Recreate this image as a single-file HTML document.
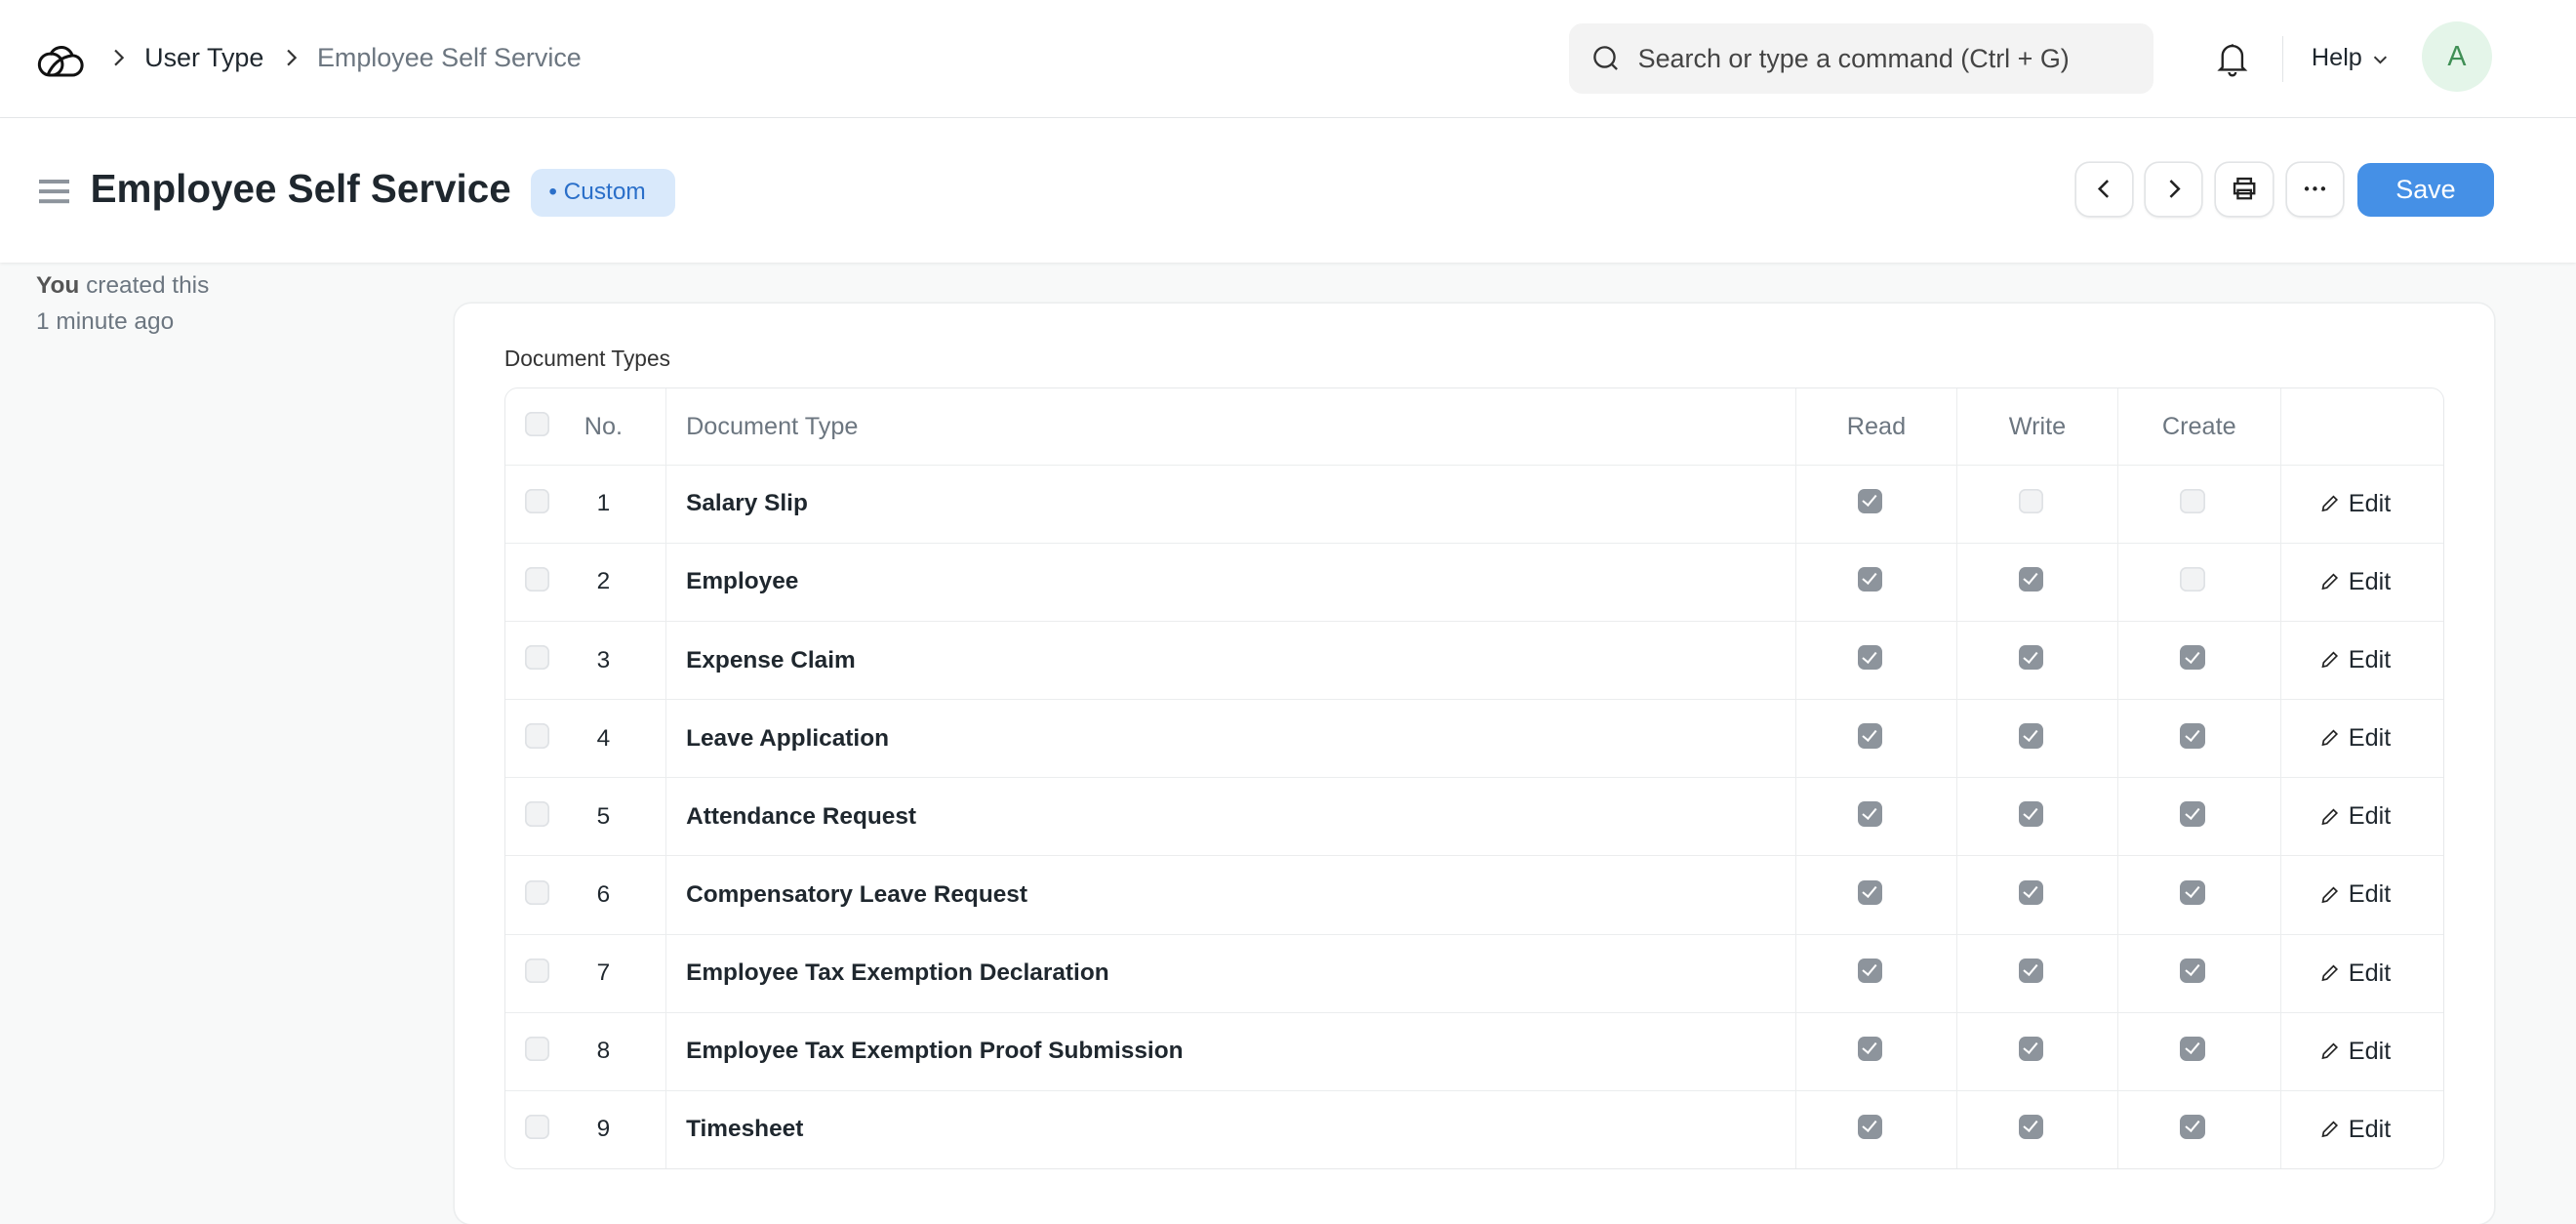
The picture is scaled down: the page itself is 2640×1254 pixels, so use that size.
<!DOCTYPE html>
<html><head><meta charset="utf-8"><style>
html{zoom:1.68367}
body{margin:0;width:1568px;height:719px;overflow:hidden;background:#f8f9f9;font-family:"Liberation Sans",sans-serif;color:#1f272e;position:relative}
.abs{position:absolute}
.nav{left:0;top:0;width:1568px;height:71px;background:#fff;border-bottom:1px solid #e6e8ea}
.head{left:0;top:72px;width:1568px;height:88px;background:#fff;box-shadow:0 1px 2px rgba(0,0,0,.08)}
.btn{top:99px;width:34px;height:32px;border-radius:8px;background:#fff;box-shadow:0 0 0 1px #e2e4e6,0 1px 2px rgba(0,0,0,.1);display:flex;align-items:center;justify-content:center}
.card{left:277px;top:185px;width:1241px;height:560px;background:#fff;border-radius:10px;box-shadow:0 0 0 1px #eceeef}
table{position:absolute;left:307px;top:236px;width:1181px;border-collapse:separate;border-spacing:0;border:1px solid #e6e8ea;border-radius:8px;font-size:14.5px;table-layout:fixed}
td,th{border-right:1px solid #ebedee;border-bottom:1px solid #ebedee;height:47px;padding:0;text-align:center}
th{font-weight:normal;color:#6c7680;font-size:15px;height:46px}
tr:last-child td{border-bottom:none}
td:last-child,th:last-child{border-right:none}
td:first-child,th:first-child{border-right:none;text-align:left;padding-left:12px}
td:nth-child(2),th:nth-child(2){padding-right:18px}
td:nth-child(4),td:nth-child(5),td:nth-child(6){padding-right:8px;vertical-align:middle}
.dt{text-align:left;padding-left:12px;font-weight:bold}
.cb{display:inline-block;width:15px;height:15px;border-radius:4px;background:#f2f3f4;box-shadow:inset 0 0 0 1px #dfe2e5;vertical-align:middle;position:relative;top:-2px}
.ck{background:#8d949c;box-shadow:none}
.ck:after{content:"";position:absolute;left:5px;top:2px;width:3.5px;height:7px;border:solid #fff;border-width:0 1.6px 1.6px 0;transform:rotate(40deg)}
.ed{font-size:15px;color:#1f272e;padding-right:8px}
.ed svg{vertical-align:-1px;margin-right:6px}
</style></head><body>
<div class="abs nav"></div>
<svg class="abs" style="left:22px;top:24px" width="30" height="24" viewBox="0 0 30 24" fill="none" stroke="#111" stroke-width="1.8"><path d="M8 22h14a6 6 0 0 0 0-12 7 7 0 0 0-13-1 5 5 0 0 0-1 13z"/><path d="M9 9a5 5 0 0 1 1 13M7 22c3-7 8-11 15-12"/></svg>
<svg class="abs" style="left:67px;top:29px" width="10" height="12" viewBox="0 0 10 12" fill="none" stroke="#333" stroke-width="1.3"><path d="M3 1.5l4.5 4.5L3 10.5"/></svg>
<div class="abs" style="left:88px;top:26px;font-size:16px;color:#1f272e">User Type</div>
<svg class="abs" style="left:172px;top:29px" width="10" height="12" viewBox="0 0 10 12" fill="none" stroke="#333" stroke-width="1.3"><path d="M3 1.5l4.5 4.5L3 10.5"/></svg>
<div class="abs" style="left:193px;top:26px;font-size:16px;color:#6c7680">Employee Self Service</div>
<div class="abs" style="left:955px;top:14px;width:356px;height:43px;background:#f3f3f3;border-radius:8px"></div>
<svg class="abs" style="left:969px;top:27px" width="18" height="18" viewBox="0 0 18 18" fill="none" stroke="#333" stroke-width="1.4"><circle cx="8" cy="8" r="6"/><path d="M12.5 12.5l3 3"/></svg>
<div class="abs" style="left:997px;top:27px;font-size:16px;color:#444">Search or type a command (Ctrl + G)</div>
<svg class="abs" style="left:1349px;top:25px" width="20" height="22" viewBox="0 0 20 22" fill="none" stroke="#222" stroke-width="1.4"><path d="M4 16V9a6 6 0 0 1 12 0v7l1.5 1.5h-15zM8 19a2 2 0 0 0 4 0M10 2v1"/></svg>
<div class="abs" style="left:1389px;top:22px;width:1px;height:28px;background:#e2e4e6"></div>
<div class="abs" style="left:1407px;top:27px;font-size:15px">Help</div>
<svg class="abs" style="left:1444px;top:32px" width="10" height="8" viewBox="0 0 10 8" fill="none" stroke="#333" stroke-width="1.2"><path d="M1.5 2.5L5 6l3.5-3.5"/></svg>
<div class="abs" style="left:1474px;top:13px;width:43px;height:43px;border-radius:50%;background:#e4f5e9;color:#3f8f55;font-size:17px;text-align:center;line-height:43px">A</div>

<div class="abs head"></div>
<div class="abs" style="left:24px;top:109px;width:18px;height:2.5px;background:#8d949c;box-shadow:0 6px 0 #8d949c,0 12px 0 #8d949c"></div>
<div class="abs" style="left:55px;top:101px;font-size:24px;font-weight:bold;color:#1f272e">Employee Self Service</div>
<div class="abs" style="left:323px;top:103px;width:88px;height:29px;background:#d9e9fb;border-radius:7px;color:#2a6fc9;font-size:14.5px;line-height:29px;text-indent:11px">• Custom</div>
<div class="abs btn" style="left:1264px"><svg width="14" height="16" viewBox="0 0 14 16" fill="none" stroke="#222" stroke-width="1.5"><path d="M9 3L4 8l5 5"/></svg></div>
<div class="abs btn" style="left:1306px"><svg width="14" height="16" viewBox="0 0 14 16" fill="none" stroke="#222" stroke-width="1.5"><path d="M5 3l5 5-5 5"/></svg></div>
<div class="abs btn" style="left:1349px"><svg width="18" height="18" viewBox="0 0 18 18" fill="none" stroke="#222" stroke-width="1.4"><path d="M5 6V3h8v3M3 6h12v6H3zM5 10h8v5H5z"/></svg></div>
<div class="abs btn" style="left:1392px"><svg width="16" height="4" viewBox="0 0 16 4" fill="#222"><circle cx="3" cy="2" r="1.3"/><circle cx="8" cy="2" r="1.3"/><circle cx="13" cy="2" r="1.3"/></svg></div>
<div class="abs" style="left:1435px;top:99px;width:83px;height:33px;border-radius:8px;background:#4590e6;color:#fff;font-size:16px;text-align:center;line-height:33px">Save</div>

<div class="abs" style="left:22px;top:163px;font-size:14.5px;color:#6c7680;line-height:22px"><b style="color:#555">You</b> created this<br>1 minute ago</div>
<div class="abs card"></div>
<div class="abs" style="left:307px;top:210px;font-size:13.5px;color:#333">Document Types</div>
<table>
<colgroup><col style="width:40px"><col style="width:58px"><col><col style="width:98px"><col style="width:98px"><col style="width:99px"><col style="width:99px"></colgroup>
<tr><th><span class="cb"></span></th><th>No.</th><th class="dt" style="font-weight:normal">Document Type</th><th>Read</th><th>Write</th><th>Create</th><th></th></tr>
<tr><td><span class="cb"></span></td><td>1</td><td class="dt">Salary Slip</td><td><span class="cb ck"></span></td><td><span class="cb"></span></td><td><span class="cb"></span></td><td class="ed"><svg width="11" height="11" viewBox="0 0 11 11" fill="none" stroke="#222" stroke-width="1"><path d="M1.5 9.5l.5-2.5 6-6 2 2-6 6z"/></svg>Edit</td></tr>
<tr><td><span class="cb"></span></td><td>2</td><td class="dt">Employee</td><td><span class="cb ck"></span></td><td><span class="cb ck"></span></td><td><span class="cb"></span></td><td class="ed"><svg width="11" height="11" viewBox="0 0 11 11" fill="none" stroke="#222" stroke-width="1"><path d="M1.5 9.5l.5-2.5 6-6 2 2-6 6z"/></svg>Edit</td></tr>
<tr><td><span class="cb"></span></td><td>3</td><td class="dt">Expense Claim</td><td><span class="cb ck"></span></td><td><span class="cb ck"></span></td><td><span class="cb ck"></span></td><td class="ed"><svg width="11" height="11" viewBox="0 0 11 11" fill="none" stroke="#222" stroke-width="1"><path d="M1.5 9.5l.5-2.5 6-6 2 2-6 6z"/></svg>Edit</td></tr>
<tr><td><span class="cb"></span></td><td>4</td><td class="dt">Leave Application</td><td><span class="cb ck"></span></td><td><span class="cb ck"></span></td><td><span class="cb ck"></span></td><td class="ed"><svg width="11" height="11" viewBox="0 0 11 11" fill="none" stroke="#222" stroke-width="1"><path d="M1.5 9.5l.5-2.5 6-6 2 2-6 6z"/></svg>Edit</td></tr>
<tr><td><span class="cb"></span></td><td>5</td><td class="dt">Attendance Request</td><td><span class="cb ck"></span></td><td><span class="cb ck"></span></td><td><span class="cb ck"></span></td><td class="ed"><svg width="11" height="11" viewBox="0 0 11 11" fill="none" stroke="#222" stroke-width="1"><path d="M1.5 9.5l.5-2.5 6-6 2 2-6 6z"/></svg>Edit</td></tr>
<tr><td><span class="cb"></span></td><td>6</td><td class="dt">Compensatory Leave Request</td><td><span class="cb ck"></span></td><td><span class="cb ck"></span></td><td><span class="cb ck"></span></td><td class="ed"><svg width="11" height="11" viewBox="0 0 11 11" fill="none" stroke="#222" stroke-width="1"><path d="M1.5 9.5l.5-2.5 6-6 2 2-6 6z"/></svg>Edit</td></tr>
<tr><td><span class="cb"></span></td><td>7</td><td class="dt">Employee Tax Exemption Declaration</td><td><span class="cb ck"></span></td><td><span class="cb ck"></span></td><td><span class="cb ck"></span></td><td class="ed"><svg width="11" height="11" viewBox="0 0 11 11" fill="none" stroke="#222" stroke-width="1"><path d="M1.5 9.5l.5-2.5 6-6 2 2-6 6z"/></svg>Edit</td></tr>
<tr><td><span class="cb"></span></td><td>8</td><td class="dt">Employee Tax Exemption Proof Submission</td><td><span class="cb ck"></span></td><td><span class="cb ck"></span></td><td><span class="cb ck"></span></td><td class="ed"><svg width="11" height="11" viewBox="0 0 11 11" fill="none" stroke="#222" stroke-width="1"><path d="M1.5 9.5l.5-2.5 6-6 2 2-6 6z"/></svg>Edit</td></tr>
<tr><td><span class="cb"></span></td><td>9</td><td class="dt">Timesheet</td><td><span class="cb ck"></span></td><td><span class="cb ck"></span></td><td><span class="cb ck"></span></td><td class="ed"><svg width="11" height="11" viewBox="0 0 11 11" fill="none" stroke="#222" stroke-width="1"><path d="M1.5 9.5l.5-2.5 6-6 2 2-6 6z"/></svg>Edit</td></tr>
</table>
</body></html>
